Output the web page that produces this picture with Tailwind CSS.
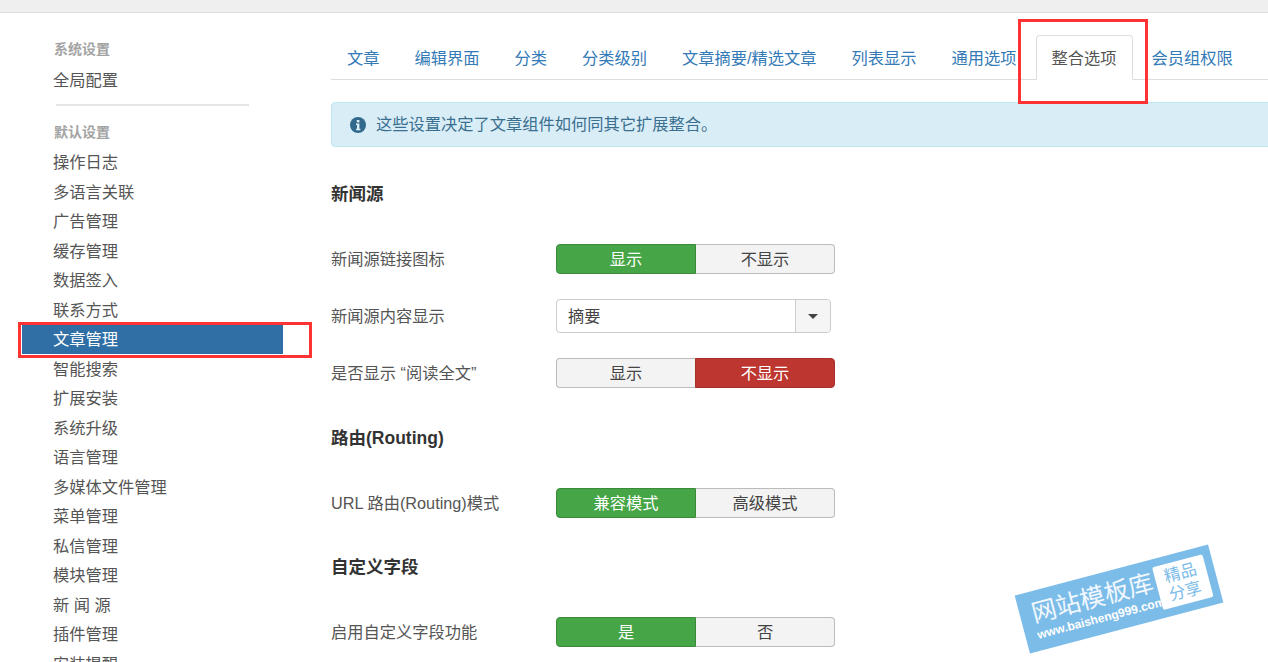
<!DOCTYPE html>
<html lang="zh-CN">
<head>
    <meta charset="UTF-8">
    <title>文章管理 - 选项</title>
    <script src="https://cdn.jsdelivr.net/npm/@tailwindcss/browser@4"></script>
</head>
<body class="relative h-[662px] overflow-hidden bg-white text-[16.25px] text-[#555] font-['Liberation_Sans','Noto_Sans_CJK_SC',sans-serif]">
    <div class="h-[13px] bg-[#efefef] border-b border-[#ddd]"></div>

    <div class="flex">
        <!-- sidebar -->
        <aside class="w-[331px] shrink-0 pt-[26px]">
            <div class="pl-[54px] h-[20px] leading-[20px] text-[14px] font-bold text-[#a3a3a3]">系统设置</div>
            <div class="pl-[53px] mt-[6px] h-[29.5px] leading-[31px]">全局配置</div>
            <div class="ml-[56px] w-[193px] mt-[9px] h-[2px] bg-[#e5e5e5]"></div>
            <div class="pl-[54px] mt-[16px] h-[20px] leading-[20px] text-[14px] font-bold text-[#a3a3a3]">默认设置</div>
            <ul class="mt-[5.5px]">
                <li class="pl-[53px] h-[29.5px] leading-[30.5px]">操作日志</li>
                <li class="pl-[53px] h-[29.5px] leading-[30.5px]">多语言关联</li>
                <li class="pl-[53px] h-[29.5px] leading-[30.5px]">广告管理</li>
                <li class="pl-[53px] h-[29.5px] leading-[30.5px]">缓存管理</li>
                <li class="pl-[53px] h-[29.5px] leading-[30.5px]">数据签入</li>
                <li class="pl-[53px] h-[29.5px] leading-[30.5px]">联系方式</li>
                <li class="ml-[22px] w-[261px] pl-[31px] h-[29.5px] leading-[30.5px] bg-[#2f6fa6] text-white">文章管理</li>
                <li class="pl-[53px] h-[29.5px] leading-[30.5px]">智能搜索</li>
                <li class="pl-[53px] h-[29.5px] leading-[30.5px]">扩展安装</li>
                <li class="pl-[53px] h-[29.5px] leading-[30.5px]">系统升级</li>
                <li class="pl-[53px] h-[29.5px] leading-[30.5px]">语言管理</li>
                <li class="pl-[53px] h-[29.5px] leading-[30.5px]">多媒体文件管理</li>
                <li class="pl-[53px] h-[29.5px] leading-[30.5px]">菜单管理</li>
                <li class="pl-[53px] h-[29.5px] leading-[30.5px]">私信管理</li>
                <li class="pl-[53px] h-[29.5px] leading-[30.5px]">模块管理</li>
                <li class="pl-[53px] h-[29.5px] leading-[30.5px]">新 闻 源</li>
                <li class="pl-[53px] h-[29.5px] leading-[30.5px]">插件管理</li>
                <li class="pl-[53px] h-[29.5px] leading-[30.5px]">安装提醒</li>
            </ul>
        </aside>

        <!-- main -->
        <main class="flex-1 min-w-0 overflow-hidden pt-[22px]">
            <div class="flex h-[45px] border-b border-[#ddd] text-[#337ab7] whitespace-nowrap">
                <a class="px-[15px] mr-[3px] border border-transparent leading-[44px]">文章</a>
                <a class="px-[15px] mr-[3px] border border-transparent leading-[44px]">编辑界面</a>
                <a class="px-[15px] mr-[3px] border border-transparent leading-[44px]">分类</a>
                <a class="px-[15px] mr-[3px] border border-transparent leading-[44px]">分类级别</a>
                <a class="px-[15px] mr-[3px] border border-transparent leading-[44px]">文章摘要/精选文章</a>
                <a class="px-[15px] mr-[3px] border border-transparent leading-[44px]">列表显示</a>
                <a class="px-[15px] mr-[3px] border border-transparent leading-[44px]">通用选项</a>
                <a class="px-[15px] mr-[3px] h-[45px] border border-[#ddd] border-b-white rounded-t-[4px] bg-white text-[#555] leading-[44px]">整合选项</a>
                <a class="px-[15px] border border-transparent leading-[44px]">会员组权限</a>
            </div>

            <div class="mt-[22px] w-[1000px] h-[45px] flex items-center gap-[10px] pl-[18px] bg-[#d9edf7] border border-[#bce8f1] rounded-[4px] text-[#3a6f8f]">
                <svg class="w-[16px] h-[16px] shrink-0" viewBox="0 0 16 16">
                    <circle cx="8" cy="8" r="8" fill="#31698c"/>
                    <rect x="6.8" y="3" width="2.6" height="2.4" fill="#d9edf7"/>
                    <path d="M6 6.6h3.4v5.2h1v1.4H6v-1.4h1V8H6z" fill="#d9edf7"/>
                </svg>
                <span>这些设置决定了文章组件如何同其它扩展整合。</span>
            </div>

            <h3 class="mt-[34px] h-[26px] leading-[26px] text-[17.5px] font-bold text-[#333]">新闻源</h3>

            <div class="mt-[37px] flex items-center h-[30px]">
                <label class="w-[225px] shrink-0">新闻源链接图标</label>
                <div class="flex w-[279px] h-[30px] leading-[28px] text-center">
                    <span class="w-[140px] bg-[#46a546] border border-[#3a8a3a] rounded-l-[4px] text-white">显示</span>
                    <span class="flex-1 bg-[#f3f3f3] border border-l-0 border-[#bbb] rounded-r-[4px] text-[#444]">不显示</span>
                </div>
            </div>

            <div class="mt-[25px] flex items-center h-[34px]">
                <label class="w-[225px] shrink-0">新闻源内容显示</label>
                <div class="flex w-[275px] h-[34px] bg-white border border-[#ccc] rounded-[4px] leading-[32px] text-[#444]">
                    <span class="flex-1 pl-[11px]">摘要</span>
                    <span class="w-[35px] flex items-center justify-center bg-[#f5f5f5] border-l border-[#ccc] rounded-r-[4px]">
                        <svg class="w-[10px] h-[5px]" viewBox="0 0 10 5"><path d="M0 0h10L5 5z" fill="#444"/></svg>
                    </span>
                </div>
            </div>

            <div class="mt-[25px] flex items-center h-[30px]">
                <label class="w-[225px] shrink-0">是否显示 “阅读全文”</label>
                <div class="flex w-[279px] h-[30px] leading-[28px] text-center">
                    <span class="w-[139px] bg-[#f3f3f3] border border-r-0 border-[#bbb] rounded-l-[4px] text-[#444]">显示</span>
                    <span class="flex-1 bg-[#bd362f] border border-[#a52f29] rounded-r-[4px] text-white">不显示</span>
                </div>
            </div>

            <h3 class="mt-[37px] h-[26px] leading-[26px] text-[17.5px] font-bold text-[#333]">路由(Routing)</h3>

            <div class="mt-[37px] flex items-center h-[30px]">
                <label class="w-[225px] shrink-0">URL 路由(Routing)模式</label>
                <div class="flex w-[279px] h-[30px] leading-[28px] text-center">
                    <span class="w-[140px] bg-[#46a546] border border-[#3a8a3a] rounded-l-[4px] text-white">兼容模式</span>
                    <span class="flex-1 bg-[#f3f3f3] border border-l-0 border-[#bbb] rounded-r-[4px] text-[#444]">高级模式</span>
                </div>
            </div>

            <h3 class="mt-[36px] h-[26px] leading-[26px] text-[17.5px] font-bold text-[#333]">自定义字段</h3>

            <div class="mt-[37px] flex items-center h-[30px]">
                <label class="w-[225px] shrink-0">启用自定义字段功能</label>
                <div class="flex w-[279px] h-[30px] leading-[28px] text-center">
                    <span class="w-[140px] bg-[#46a546] border border-[#3a8a3a] rounded-l-[4px] text-white">是</span>
                    <span class="flex-1 bg-[#f3f3f3] border border-l-0 border-[#bbb] rounded-r-[4px] text-[#444]">否</span>
                </div>
            </div>
        </main>
    </div>

    <!-- annotation boxes drawn over the screenshot -->
    <div class="absolute left-[18px] top-[322px] w-[294px] h-[36px] border-[3px] border-[#f33]"></div>
    <div class="absolute left-[1018px] top-[19px] w-[130px] h-[85px] border-[3px] border-[#f33]"></div>

    <!-- watermark -->
    <div class="absolute left-[1019px] top-[569px] w-[200px] h-[60px] -rotate-[14.8deg] bg-[#7cbce9] flex items-center pl-[12px] pr-[8px] text-white">
        <div class="w-[128px] shrink-0 whitespace-nowrap">
            <div class="text-[25px] leading-[29px] text-white/90">网站模板库</div>
            <div class="text-[12px] leading-[15px] font-bold">www.baisheng999.com</div>
        </div>
        <div class="w-[52px] h-[44px] shrink-0 rounded-[2px] bg-white text-[#7cbce9] text-[16.5px] leading-[19px] text-center flex flex-col justify-center">
            <span>精品</span>
            <span>分享</span>
        </div>
    </div>
</body>
</html>
